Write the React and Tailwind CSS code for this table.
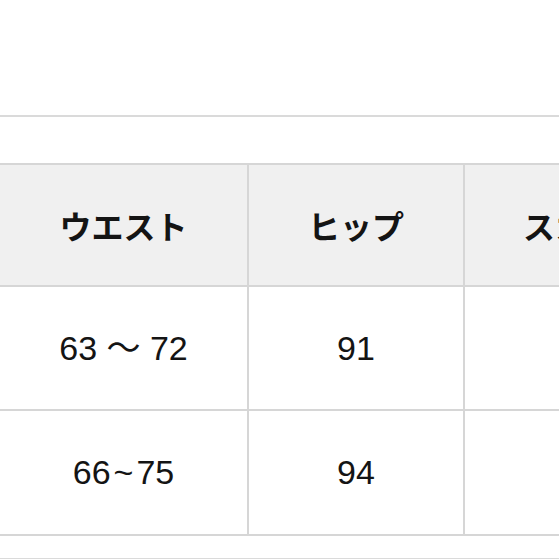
import React from 'react';

const rows = [
  ['63 ～ 72', '91', ''],
  ['66~75', '94', ''],
];

const headers = ['ウエスト', 'ヒップ', 'スカート丈'];

const colWidths = ['w-[249px]', 'w-[216px]', 'w-[278px]'];

const renderCell = (c) => {
  // the half-width tilde sits a little apart from the digits in the reference
  if (c.includes('~')) {
    const [a, b] = c.split('~');
    return (
      <span>
        {a}
        <span className="mx-[3px]">~</span>
        {b}
      </span>
    );
  }
  return c;
};

export default function App() {
  return (
    <div className="w-[559px] h-[559px] overflow-hidden bg-white text-[#141414]" style={{ fontFamily: '"Liberation Sans", "Noto Sans CJK JP", sans-serif' }}>
      <div className="h-[115px]" />
      <div className="border-t-2 border-[#dadada] h-[48px]" />

      {/* size table */}
      <div className="w-[745px] border-t-2 border-[#d6d6d6]">
        <div className="flex bg-[#f0f0f0]">
          {headers.map((h, i) => (
            <div
              key={h}
              className={`${colWidths[i]} h-[122px] shrink-0 flex items-center justify-center border-b-2 border-r-2 border-[#d6d6d6] text-[32px] font-bold`}
              style={{ fontFamily: '"Noto Sans CJK JP", sans-serif' }}
            >
              {h}
            </div>
          ))}
        </div>
        {rows.map((r, ri) => (
          <div key={ri} className="flex">
            {r.map((c, i) => (
              <div
                key={i}
                className={`${colWidths[i]} ${ri === 0 ? 'h-[124px]' : 'h-[125px]'} shrink-0 flex items-center justify-center border-b-2 border-r-2 border-[#d6d6d6] text-[34px]`}
              >
                {renderCell(c)}
              </div>
            ))}
          </div>
        ))}
      </div>

      <div className="h-[22px]" />
      <div className="border-t-2 border-[#dadada]" />
    </div>
  );
}
